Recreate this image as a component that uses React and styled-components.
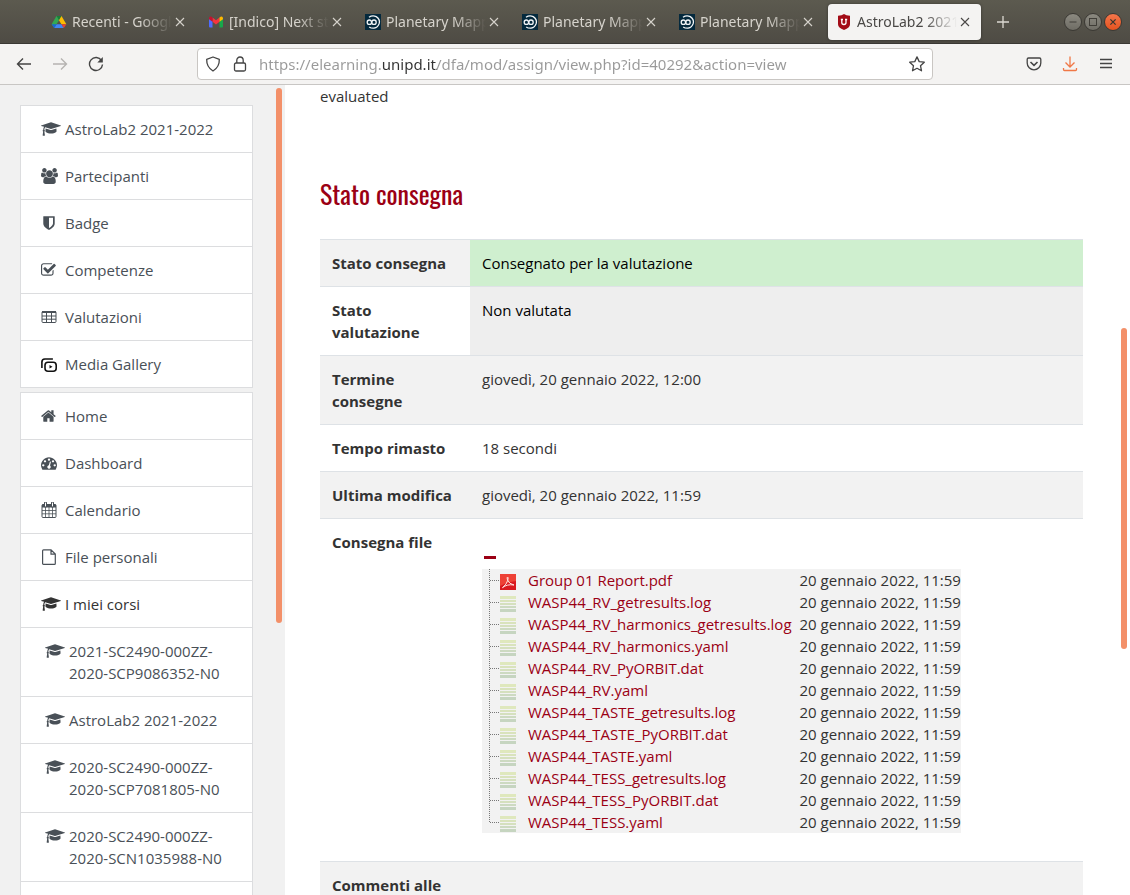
import React from "react";
import styled, { createGlobalStyle, css } from "styled-components";

const GlobalStyle = createGlobalStyle`
  *, *::before, *::after { box-sizing: border-box; }
  body {
    margin: 0;
    background: #fff;
    color: #333;
    font-family: "Open Sans", "Noto Sans", sans-serif;
    font-size: 15px;
    line-height: 22px;
  }
  button, input { font: inherit; }
`;

const Window = styled.div`
  display: flex;
  flex-direction: column;
  height: 100vh;
  overflow: hidden;
`;

/* Browser chrome */

const TabBar = styled.header`
  display: flex;
  align-items: center;
  flex: none;
  height: 44px;
  padding: 0 8px 0 43px;
  background: linear-gradient(#5c5a4f, #4e4b44);
  border-bottom: 1px solid #3a3834;
  font-family: "Noto Sans", "Open Sans", sans-serif;
  font-size: 14px;
`;

const TabList = styled.div`
  display: flex;
  gap: 4px;
`;

const Tab = styled.div`
  display: flex;
  align-items: center;
  width: 153px;
  height: 36px;
  padding: 0 8px;
  border-radius: 4px;
  color: #d6d3cc;
  ${(p) =>
    p.$active &&
    css`
      background: #f4f3f2;
      color: #4a4846;
      box-shadow: 0 0 3px rgba(0, 0, 0, 0.4);
    `}
`;

const TabTitle = styled.button`
  flex: 1;
  min-width: 0;
  margin-left: 5px;
  padding: 0;
  border: 0;
  background: none;
  color: inherit;
  text-align: left;
  white-space: nowrap;
  overflow: hidden;
  mask-image: linear-gradient(to right, #000 68%, transparent);
`;

const IconButton = styled.button`
  display: flex;
  align-items: center;
  justify-content: center;
  flex: none;
  width: ${(p) => p.$size || 16}px;
  height: ${(p) => p.$size || 16}px;
  padding: 0;
  border: 0;
  background: none;
  color: ${(p) => p.$color || "inherit"};
`;

const NewTab = styled(IconButton)`
  margin-left: 14px;
  color: #dcd9d2;
`;

const WindowButtons = styled.div`
  display: flex;
  gap: 2px;
  margin-left: auto;
`;

const WindowButton = styled(IconButton)`
  width: 18px;
  height: 18px;
  border: 1px solid #3b3934;
  border-radius: 50%;
  color: #383630;
  background: ${(p) => (p.$close ? "linear-gradient(#f4764b, #e5531f)" : "linear-gradient(#8b8980, #6f6d65)")};
`;

const Toolbar = styled.div`
  display: flex;
  align-items: center;
  flex: none;
  height: 41px;
  padding: 0 16px;
  background: #f4f3f2;
  border-bottom: 1px solid #c8c6c4;
  font-family: "Noto Sans", "Open Sans", sans-serif;
`;

const ToolGroup = styled.div`
  display: flex;
  gap: ${(p) => p.$gap}px;
`;

const AddressBar = styled.form`
  display: flex;
  align-items: center;
  flex: 1;
  height: 32px;
  margin: 0 93px;
  padding: 0 7px;
  gap: 11px;
  background: #fff;
  border: 1px solid #c9c6c3;
  border-radius: 4px;
  color: #444;
`;

const AddressInput = styled.input`
  flex: 1;
  min-width: 0;
  padding: 0;
  border: 0;
  outline: 0;
  color: transparent;
  background: linear-gradient(to right, #999 122px, #333 122px, #333 178px, #999 178px);
  background-clip: text;
`;

/* Page */

const Page = styled.div`
  display: flex;
  flex: 1;
  min-height: 0;
`;

const Sidebar = styled.aside`
  position: relative;
  flex: none;
  width: 285px;
  padding: 20px 32px 0 20px;
  overflow: hidden;
  background: #f1f1f1;
`;

const ScrollThumb = styled.div`
  position: absolute;
  top: ${(p) => p.$top};
  right: 3px;
  width: 6px;
  height: ${(p) => p.$height};
  border-radius: 3px;
  background: #f39069;
`;

const NavList = styled.ul`
  margin: 0 0 4px;
  padding: 0;
  list-style: none;
  border: 1px solid #dcdddf;
  border-top: 0;
  background: #fff;
`;

const NavItem = styled.li`
  border-top: 1px solid #dcdddf;
`;

const NavLink = styled.a`
  display: flex;
  gap: 4px;
  min-height: 46px;
  padding: 12px 20px 12px ${(p) => (p.$nested ? 24 : 20)}px;
  color: ${(p) => (p.$current ? "#333" : "#495057")};
  text-decoration: none;
`;

const NavIcon = styled.span`
  display: flex;
  align-items: center;
  flex: none;
  width: 20px;
  height: 22px;
`;

const Main = styled.main`
  position: relative;
  flex: 1;
  min-width: 0;
  padding: 0 47px 0 35px;
  overflow: hidden;
`;

const Paragraph = styled.p`
  margin: 0 0 71px;
`;

const Heading = styled.h3`
  margin: 0 0 29px;
  color: #9b0014;
  font-family: "Oswald", "Liberation Sans Narrow", sans-serif;
  font-size: 26px;
  font-weight: 400;
  line-height: 32px;
`;

const StatusTable = styled.table`
  width: 100%;
  border-collapse: separate;
  border-spacing: 0;
`;

const StatusRow = styled.tr`
  background: ${(p) => (p.$odd ? "#f2f2f2" : "#fff")};
`;

const StatusHead = styled.th`
  width: 150px;
  padding: 12px;
  border-top: 1px solid #dee2e6;
  text-align: left;
  vertical-align: top;
  font-weight: 700;
`;

const tones = {
  submitted: css`
    color: #000;
    background: #cfefcf;
  `,
  notgraded: css`
    color: #000;
    background: #eee;
  `,
};

const StatusCell = styled.td`
  padding: 12px;
  border-top: 1px solid #dee2e6;
  vertical-align: top;
  ${(p) => tones[p.$tone]}
`;

const CollapseButton = styled.button`
  display: flex;
  align-items: flex-end;
  width: 16px;
  height: 38px;
  padding: 0 2px 10px;
  border: 0;
  background: none;
`;

const CollapseMark = styled.span`
  width: 12px;
  height: 3px;
  background: #9b0014;
`;

const FileTable = styled.table`
  margin-bottom: 16px;
  border-collapse: collapse;
  background: #f2f2f2;
`;

const FileCell = styled.td`
  height: 22px;
  padding: 0 ${(p) => p.$right || 0}px 0 0;
  white-space: nowrap;
`;

const TreeIcon = styled.svg`
  display: block;
`;

const FileLink = styled.a`
  color: #9b0014;
  text-decoration: none;
`;

/* Icons */

const solidIcons = {
  cap: {
    box: "0 0 2304 1792",
    w: 20,
    d: "M1774 836l18 316q4 69-82 128t-235 93.500-323 34.500-323-34.500-235-93.500-82-128l18-316 574 181q22 7 48 7t48-7zM2304 512q0 23-22 31l-1120 352q-4 1-10 1t-10-1l-652-206q-43 34-71 111.500t-34 178.500q63 36 63 109 0 69-58 107l58 433q2 14-8 25-9 11-24 11h-192q-15 0-24-11-10-11-8-25l58-433q-58-38-58-107 0-73 65-111 11-207 98-330l-333-104q-22-8-22-31t22-31l1120-352q4-1 10-1t10 1l1120 352q22 8 22 31z",
  },
  users: {
    box: "0 0 1920 1792",
    w: 17,
    d: "M593 896q-162 5-265 128h-134q-82 0-138-40.500t-56-118.500q0-353 124-353 6 0 43.500 21t97.500 42.500 119 21.500q67 0 133-23-5 37-5 66 0 139 81 256zM1664 1533q0 120-73 189.500t-194 69.500h-874q-121 0-194-69.500t-73-189.500q0-53 3.500-103.500t14-109 26.500-108.500 43-97.500 62-81 85.500-53.500 111.500-20q10 0 43 21.500t73 48 107 48 135 21.500 135-21.500 107-48 73-48 43-21.500q61 0 111.500 20t85.500 53.500 62 81 43 97.500 26.500 108.500 14 109 3.500 103.500zM640 256q0 106-75 181t-181 75-181-75-75-181 75-181 181-75 181 75 75 181zM1344 640q0 159-112.500 271.500t-271.500 112.500-271.500-112.500-112.500-271.500 112.500-271.500 271.500-112.500 271.500 112.500 112.500 271.500zM1920 865q0 78-56 118.500t-138 40.500h-134q-103-123-265-128 81-117 81-256 0-29-5-66 66 23 133 23 59 0 119-21.500t97.500-42.500 43.500-21q124 0 124 353zM1792 256q0 106-75 181t-181 75-181-75-75-181 75-181 181-75 181 75 75 181z",
  },
  shield: {
    box: "0 0 1792 1792",
    w: 16,
    d: "M1344 960v-640h-448v1137q119-63 213-137 235-184 235-360zM1536 192v768q0 86-33.500 170.500t-83 150-118 127.500-126.500 103-121 77.500-89.500 49.500-42.500 20q-12 6-26 6t-26-6q-16-7-42.500-20t-89.500-49.500-121-77.500-126.500-103-118-127.500-83-150-33.500-170.500v-768q0-26 19-45t45-19h1152q26 0 45 19t19 45z",
  },
  check: {
    box: "64 0 1792 1792",
    w: 16,
    d: "M1472 930v318q0 119-84.500 203.500t-203.500 84.500h-832q-119 0-203.500-84.500t-84.500-203.500v-832q0-119 84.500-203.500t203.500-84.500h832q63 0 117 25 15 7 18 23 3 17-9 29l-49 49q-10 10-23 10-3 0-9-2-23-6-45-6h-832q-66 0-113 47t-47 113v832q0 66 47 113t113 47h832q66 0 113-47t47-113v-254q0-13 9-22l64-64q10-10 23-10 6 0 12 3 20 8 20 29zM1703 441l-814 814q-24 24-57 24t-57-24l-430-430q-24-24-24-57t24-57l110-110q24-24 57-24t57 24l263 263 647-647q24-24 57-24t57 24l110 110q24 24 24 57t-24 57z",
  },
  home: {
    box: "64 0 1792 1792",
    w: 16,
    d: "M1472 992v480q0 26-19 45t-45 19h-384v-384h-256v384h-384q-26 0-45-19t-19-45v-480q0-1 .5-3t.5-3l575-474 575 474q1 2 1 6zM1695 923l-62 74q-8 9-21 11h-3q-13 0-21-7l-692-577-692 577q-12 8-24 7-13-2-21-11l-62-74q-8-10-7-23.500t11-21.500l719-599q32-26 76-26t76 26l244 204v-195q0-14 9-23t23-9h192q14 0 23 9t9 23v408l219 182q10 8 11 21.500t-7 23.500z",
  },
  dash: {
    box: "0 0 1792 1792",
    w: 16,
    d: "M384 1152q0-53-37.500-90.500t-90.500-37.500-90.500 37.500-37.500 90.500 37.500 90.500 90.500 37.500 90.500-37.500 37.500-90.500zM576 704q0-53-37.500-90.500t-90.500-37.500-90.500 37.500-37.500 90.500 37.500 90.500 90.500 37.500 90.500-37.500 37.500-90.500zM1004 1185l101-382q6-26-7.500-48.500t-38.500-29.500-48 6.500-30 39.500l-101 382q-60 5-107 43.500t-63 98.500q-20 77 20 146t117 89 146-20 89-117q16-60-6-117t-72-91zM1664 1152q0-53-37.500-90.500t-90.500-37.500-90.500 37.500-37.500 90.500 37.500 90.500 90.500 37.500 90.500-37.500 37.500-90.500zM1024 512q0-53-37.500-90.500t-90.500-37.500-90.500 37.500-37.500 90.500 37.500 90.500 90.500 37.500 90.500-37.500 37.500-90.500zM1472 704q0-53-37.500-90.500t-90.500-37.500-90.500 37.500-37.500 90.500 37.500 90.500 90.500 37.500 90.500-37.500 37.500-90.500zM1792 1152q0 261-141 483-19 29-54 29h-1402q-35 0-54-29-141-221-141-483 0-182 71-348t191-286 286-191 348-71 348 71 286 191 191 286 71 348z",
  },
};

const Line = ({ size = 16, w = 1, children, ...rest }) => (
  <svg width={size} height={size} viewBox="0 0 16 16" fill="none" stroke="currentColor" strokeWidth={w} aria-hidden="true" {...rest}>
    {children}
  </svg>
);

function MenuIcon({ name }) {
  const solid = solidIcons[name];
  if (solid) {
    return (
      <svg width={solid.w} height="16" viewBox={solid.box} fill="currentColor" aria-hidden="true">
        <path d={solid.d} />
      </svg>
    );
  }
  if (name === "table")
    return (
      <Line>
        <rect x="1" y="2.500" width="14" height="11" rx="1" />
        <path d="M1 3h14" strokeWidth="2" />
        <path d="M1 7h14M1 10.200h14M5.500 3v10.500M10.500 3v10.500" />
      </Line>
    );
  if (name === "calendar")
    return (
      <Line>
        <rect x="1" y="2.500" width="14" height="13" rx="1" />
        <path d="M1 4h14" strokeWidth="3" />
        <path d="M1 8.500h14M1 11.800h14M4.500 5v10.500M8 5v10.500M11.500 5v10.500" strokeWidth="0.800" />
        <path d="M4.500 1v3M11.500 1v3" strokeWidth="3" strokeLinecap="round" />
        <path d="M4.500 1v3M11.500 1v3" stroke="#fff" strokeLinecap="round" />
      </Line>
    );
  if (name === "file")
    return (
      <Line w={1.200}>
        <path d="M2.500.800h7.500l4.300 4.300v9.300q0 .9-.9.900h-10.900q-.9 0-.9-.9v-12.700q0-.9.900-.9zM10 .8v4.300h4.300" />
      </Line>
    );
  return (
    <Line w={1.600} color="#111">
      <path d="M.9 12V6q0-3 3-3h8" />
      <rect x="4" y="6.200" width="11.200" height="9" rx="3" />
      <path d="M8.500 9v3.600l3-1.800z" fill="currentColor" stroke="none" />
    </Line>
  );
}

const DriveLogo = () => (
  <svg width="16" height="16" viewBox="0 0 16 16" aria-hidden="true">
    <path d="M5.500 2h5L8 6.300z" fill="#188038" />
    <path d="M5.500 2L8 6.300 3.200 14 .6 10.200z" fill="#34a853" />
    <path d="M10.500 2L15.400 10.200h-5L8 6.300z" fill="#fbbc04" />
    <path d="M5.600 10.200h4.800l2.400 3.900H3.100z" fill="#4285f4" />
    <path d="M.6 10.200h5L3.100 14z" fill="#1967d2" />
    <path d="M10.400 10.200h5L12.800 14z" fill="#ea4335" />
  </svg>
);

const MailLogo = () => (
  <svg width="16" height="16" viewBox="0 0 16 16" aria-hidden="true">
    <path d="M1 4.500l3.500 2.600V13.500H2q-1 0-1-1z" fill="#4f6bff" />
    <path d="M15 4.500l-3.500 2.600V13.500H14q1 0 1-1z" fill="#18a84b" />
    <path d="M4.500 3.600L8 6.300l3.500-2.700v4.200L8 10.500 4.500 7.800z" fill="#f5333f" />
    <path d="M1 4.400Q1 2.300 3 2.600l1.500 1v4.200L1 5.200z" fill="#c8102e" />
    <path d="M15 4.400q0-2.100-2-1.800l-1.500 1v4.200L15 5.200z" fill="#ffb900" />
  </svg>
);

const PlanetLogo = () => (
  <svg width="16" height="16" viewBox="0 0 16 16" fill="none" stroke="#f2f5f7" strokeWidth="1.300" aria-hidden="true">
    <path d="M0 0h16v16H0z" fill="#04293d" stroke="none" />
    <circle cx="4.400" cy="8.200" r="2.200" />
    <circle cx="9" cy="8.200" r="2.200" />
    <path d="M4 3.200Q7.500.8 11.200 2.600q4 2.600 3.100 6.600-1.200 4.400-5.300 5-2.800.2-4.800-1.300" />
  </svg>
);

const UnipdLogo = () => (
  <svg width="16" height="16" viewBox="0 0 16 16" fill="none" aria-hidden="true">
    <path d="M8 0q2 1.700 6 1.800v8.400q0 3.500-6 5.800-6-2.300-6-5.800V1.800Q6 1.700 8 0z" fill="#a30c17" />
    <path d="M4.800 5.500h2.200M5.800 5.500v3q0 2 2.100 2t2.100-2v-3M9 5.500h2.200" stroke="#fff" strokeWidth="1.300" />
  </svg>
);

const CloseIcon = () => (
  <Line w={1.100} size={16}>
    <path d="M4 4l8 8M12 4l-8 8" />
  </Line>
);

const PdfIcon = ({ y }) => (
  <g>
    <rect x="18" y={y} width="16" height="16" fill="#d9191f" />
    <path d={`M18 ${y}h16v7q-8 1-16 5z`} fill="#ee4136" />
    <path
      d={`M25.500 ${y + 3}q1.200 0 .3 3.200-1 4-5.300 7.500 4.500-3.800 11.500-2.700-4.800-.9-6.500-5-.8-2.800 0-3z`}
      fill="none"
      stroke="#ffe3e0"
    />
  </g>
);

const TextFileIcon = ({ y }) => (
  <g>
    <rect x="18" y={y} width="16" height="3" fill="#dfe8bd" />
    <rect x="18" y={y + 4} width="16" height="2" fill="#d9e3bc" />
    <rect x="18" y={y + 7} width="16" height="2" fill="#d5e0be" />
    <rect x="18" y={y + 10} width="16" height="2" fill="#cddac1" />
    <rect x="18" y={y + 13} width="16" height="3" fill="#c6d5c0" />
  </g>
);

/* Data */

const tabs = [
  { title: "Recenti - Googl", Logo: DriveLogo },
  { title: "[Indico] Next st", Logo: MailLogo },
  { title: "Planetary Mapp", Logo: PlanetLogo },
  { title: "Planetary Mapp", Logo: PlanetLogo },
  { title: "Planetary Mapp", Logo: PlanetLogo },
  { title: "AstroLab2 2021", Logo: UnipdLogo, active: true },
];

const courseNav = [
  { icon: "cap", label: "AstroLab2 2021-2022" },
  { icon: "users", label: "Partecipanti" },
  { icon: "shield", label: "Badge" },
  { icon: "check", label: "Competenze" },
  { icon: "table", label: "Valutazioni" },
  { icon: "media", label: "Media Gallery" },
];

const siteNav = [
  { icon: "home", label: "Home" },
  { icon: "dash", label: "Dashboard" },
  { icon: "calendar", label: "Calendario" },
  { icon: "file", label: "File personali" },
  { icon: "cap", label: "I miei corsi", current: true },
  { icon: "cap", label: "2021-SC2490-000ZZ-2020-SCP9086352-N0", nested: true },
  { icon: "cap", label: "AstroLab2 2021-2022", nested: true },
  { icon: "cap", label: "2020-SC2490-000ZZ-2020-SCP7081805-N0", nested: true },
  { icon: "cap", label: "2020-SC2490-000ZZ-2020-SCN1035988-N0", nested: true },
];

const files = [
  "Group 01 Report.pdf",
  "WASP44_RV_getresults.log",
  "WASP44_RV_harmonics_getresults.log",
  "WASP44_RV_harmonics.yaml",
  "WASP44_RV_PyORBIT.dat",
  "WASP44_RV.yaml",
  "WASP44_TASTE_getresults.log",
  "WASP44_TASTE_PyORBIT.dat",
  "WASP44_TASTE.yaml",
  "WASP44_TESS_getresults.log",
  "WASP44_TESS_PyORBIT.dat",
  "WASP44_TESS.yaml",
];

function Nav({ items, label, children }) {
  return (
    <nav aria-label={label}>
      <NavList>
        {items.map((item) => (
          <NavItem key={item.label}>
            <NavLink href="#" $nested={item.nested} $current={item.current}>
              <NavIcon>
                <MenuIcon name={item.icon} />
              </NavIcon>
              <span>{item.label}</span>
            </NavLink>
          </NavItem>
        ))}
        {children}
      </NavList>
    </nav>
  );
}

function FileTree() {
  return (
    <>
      <CollapseButton type="button" aria-label="Comprimi" aria-expanded="true">
        <CollapseMark />
      </CollapseButton>
      <FileTable>
        <tbody>
          {files.map((name, i) => (
            <tr key={name}>
              <FileCell $right={12}>
                <TreeIcon width="34" height="22" viewBox="0 0 34 22" aria-hidden="true">
                  <path
                    d={`M7.500 0V${i === files.length - 1 ? 12 : 22}M8 11.500H18`}
                    stroke="#777"
                    strokeDasharray="1 1"
                  />
                  {name.endsWith(".pdf") ? <PdfIcon y={5} /> : <TextFileIcon y={5} />}
                </TreeIcon>
              </FileCell>
              <FileCell $right={8}>
                <FileLink href="#">{name}</FileLink>
              </FileCell>
              <FileCell>20 gennaio 2022, 11:59</FileCell>
            </tr>
          ))}
        </tbody>
      </FileTable>
    </>
  );
}

const statusRows = [
  { label: "Stato consegna", value: "Consegnato per la valutazione", tone: "submitted" },
  { label: "Stato valutazione", value: "Non valutata", tone: "notgraded" },
  { label: "Termine consegne", value: "giovedì, 20 gennaio 2022, 12:00" },
  { label: "Tempo rimasto", value: "18 secondi" },
  { label: "Ultima modifica", value: "giovedì, 20 gennaio 2022, 11:59" },
  { label: "Consegna file", value: <FileTree /> },
  { label: "Commenti alle consegne", value: "" },
];

export default function App() {
  return (
    <Window>
      <GlobalStyle />
      <TabBar>
        <TabList>
          {tabs.map(({ title, Logo, active }, i) => (
            <Tab key={i} $active={active}>
              <Logo />
              <TabTitle type="button">{title}</TabTitle>
              <IconButton type="button" aria-label="Chiudi scheda">
                <CloseIcon />
              </IconButton>
            </Tab>
          ))}
        </TabList>
        <NewTab type="button" aria-label="Nuova scheda">
          <Line w={1.300}>
            <path d="M8 2v12M2 8h12" />
          </Line>
        </NewTab>
        <WindowButtons>
          <WindowButton type="button" aria-label="Riduci">
            <Line size={14}>
              <path d="M4 8h8" />
            </Line>
          </WindowButton>
          <WindowButton type="button" aria-label="Ingrandisci">
            <Line size={14}>
              <rect x="4" y="4" width="8" height="8" />
            </Line>
          </WindowButton>
          <WindowButton type="button" aria-label="Chiudi" $close>
            <Line size={14} w={1.500}>
              <path d="M5 5l6 6M11 5l-6 6" />
            </Line>
          </WindowButton>
        </WindowButtons>
      </TabBar>
      <Toolbar>
        <ToolGroup $gap={20}>
          <IconButton type="button" aria-label="Indietro" $color="#444">
            <Line w={1.400}>
              <path d="M15 8H1.500M7 2.500L1.500 8 7 13.500" />
            </Line>
          </IconButton>
          <IconButton type="button" aria-label="Avanti" $color="#b5b3b1">
            <Line w={1.400}>
              <path d="M1 8h13.500M9 2.500L14.500 8 9 13.500" />
            </Line>
          </IconButton>
          <IconButton type="button" aria-label="Ricarica" $color="#444">
            <Line w={1.400}>
              <path d="M13.500 4.500A6.500 6.500 0 1 0 14.500 8.500" />
              <path d="M14.800 1v5.500H9.300z" fill="currentColor" stroke="none" />
            </Line>
          </IconButton>
        </ToolGroup>
        <AddressBar>
          <Line w={1.300}>
            <path d="M8 1l6.300 2.400Q14.600 11 8 15 1.400 11 1.700 3.400z" strokeLinejoin="round" />
          </Line>
          <Line w={1.300}>
            <rect x="2.500" y="7" width="11" height="8" rx="1.500" />
            <path d="M4.800 7V4.200a3.200 3.200 0 0 1 6.400 0V7" />
          </Line>
          <AddressInput
            type="text"
            aria-label="Indirizzo"
            defaultValue="https://elearning.unipd.it/dfa/mod/assign/view.php?id=40292&action=view"
          />
          <IconButton type="button" aria-label="Aggiungi ai segnalibri" $color="#444">
            <Line w={1.300}>
              <path d="M8 .9l2.200 4.700 5.100.6-3.800 3.500 1 5.100L8 12.300l-4.500 2.500 1-5.100L.7 6.200l5.100-.6z" strokeLinejoin="round" />
            </Line>
          </IconButton>
        </AddressBar>
        <ToolGroup $gap={20}>
          <IconButton type="button" aria-label="Pocket" $color="#444">
            <Line w={1.300}>
              <path d="M2.500 2h11q1.300 0 1.300 1.300V7a6.800 6.800 0 0 1-13.600 0V3.300Q1.200 2 2.500 2z" />
              <path d="M4.500 6L8 9.300 11.500 6" strokeWidth="1.600" />
            </Line>
          </IconButton>
          <IconButton type="button" aria-label="Download" $color="#f07746">
            <Line w={1.300}>
              <path d="M8 .5v10.500M3.500 6.500L8 11l4.500-4.500M1.500 12v1.500q0 1 1 1h11q1 0 1-1V12" />
            </Line>
          </IconButton>
          <IconButton type="button" aria-label="Menu" $color="#444">
            <Line w={1.300}>
              <path d="M2 3.500h12M2 7.500h12M2 11.500h12" />
            </Line>
          </IconButton>
        </ToolGroup>
      </Toolbar>
      <Page>
        <Sidebar>
          <Nav items={courseNav} label="Corso" />
          <Nav items={siteNav} label="Sito">
            <NavItem>
              <NavLink as="span" />
            </NavItem>
          </Nav>
          <ScrollThumb $top="3px" $height="66%" />
        </Sidebar>
        <Main>
          <Paragraph>evaluated</Paragraph>
          <Heading>Stato consegna</Heading>
          <StatusTable>
            <tbody>
              {statusRows.map((row, i) => (
                <StatusRow key={row.label} $odd={i % 2 === 0}>
                  <StatusHead scope="row">{row.label}</StatusHead>
                  <StatusCell $tone={row.tone}>{row.value}</StatusCell>
                </StatusRow>
              ))}
            </tbody>
          </StatusTable>
          <ScrollThumb $top="30%" $height="321px" />
        </Main>
      </Page>
    </Window>
  );
}
